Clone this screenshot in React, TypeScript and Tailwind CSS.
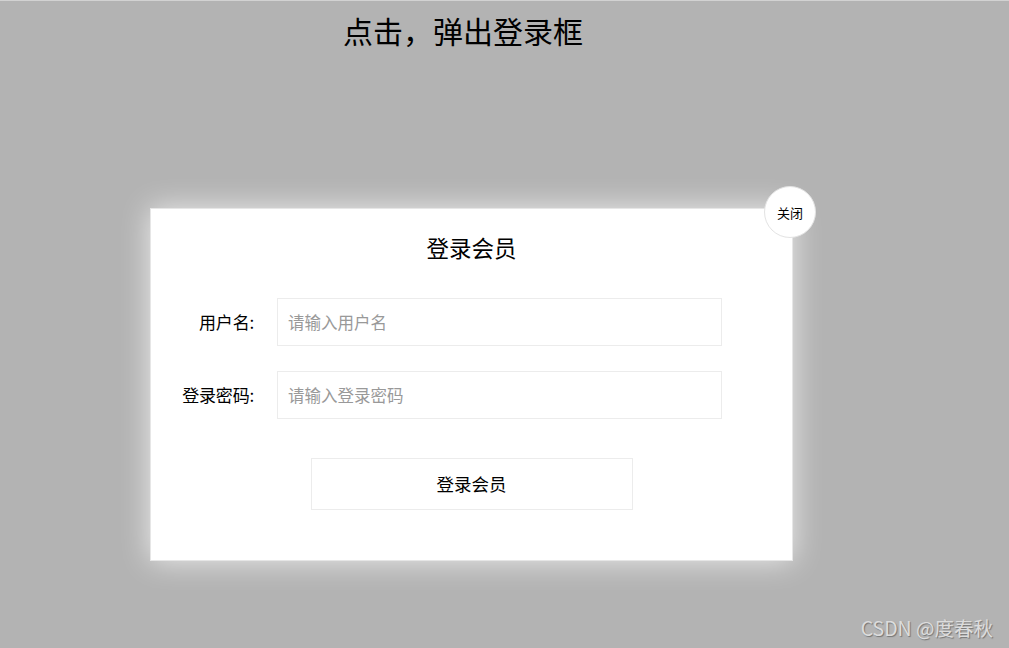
const CJK = "font-['Microsoft_YaHei','Noto_Sans_CJK_SC',sans-serif]"

export default function App() {
  return (
    <div className={`relative h-[648px] w-full overflow-hidden bg-[#b3b3b3] border-t border-[#d2d2d2] ${CJK}`}>
      <h1 className="ml-[343px] pt-[14px] text-[30px] leading-[30px] text-black font-normal">点击，弹出登录框</h1>

      {/* Login dialog */}
      <div className="relative ml-[150px] mt-[163px] w-[643px] h-[353px] bg-white border border-[#e6e6e6] shadow-[0_0_28px_rgba(255,255,255,0.75)]">
        <button className="absolute -right-[24px] -top-[23px] w-[52px] h-[52px] rounded-full bg-white border border-[#e3e3e3] text-[13px] leading-none text-black">
          关闭
        </button>

        <h2 className="pt-[27px] text-center text-[22.5px] leading-[22px] text-black">登录会员</h2>

        <div className="mt-[40px] flex flex-col gap-[25px]">
          {[
            { label: '用户名：', placeholder: '请输入用户名', type: 'text' },
            { label: '登录密码：', placeholder: '请输入登录密码', type: 'password' },
          ].map((f) => (
            <div key={f.label} className="flex items-center">
              <label className="w-[103px] text-right text-[17px] text-black tracking-[-0.2px]">{f.label.replace('：', ':')}</label>
              <input
                type={f.type}
                placeholder={f.placeholder}
                className="ml-[23px] w-[445px] h-[48px] border border-[#ececec] px-[10px] text-[16.5px] outline-none placeholder:text-[#999]"
              />
            </div>
          ))}
        </div>

        <div className="mt-[39px] flex justify-center">
          <button className="w-[322px] h-[52px] border border-[#ececec] bg-white text-[17.5px] text-black">登录会员</button>
        </div>
      </div>

      <div className="absolute right-[16px] bottom-[6px] text-[19.5px] text-[#dcdcdc] [text-shadow:1px_1px_1px_rgba(0,0,0,0.35)]">
        CSDN @度春秋
      </div>
    </div>
  )
}
